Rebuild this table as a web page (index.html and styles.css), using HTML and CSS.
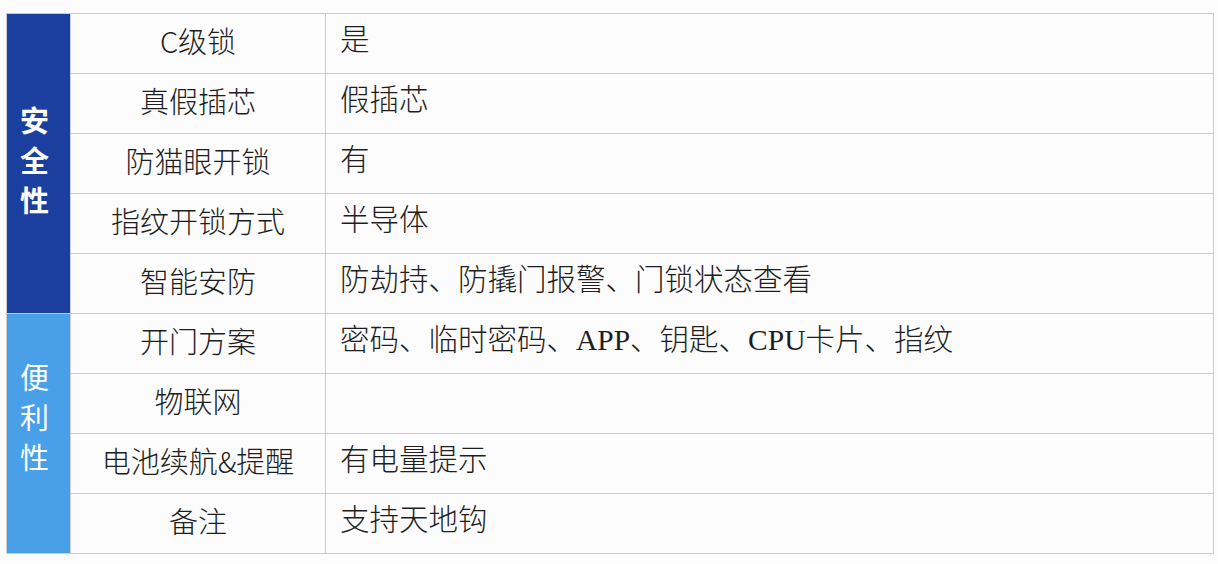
FILE: index.html
```html
<!DOCTYPE html>
<html lang="zh">
<head>
<meta charset="utf-8">
<link rel="stylesheet" href="styles.css">
</head>
<body>
<table class="spec">
  <colgroup>
    <col class="c-cat">
    <col class="c-name">
    <col class="c-val">
  </colgroup>
  <tbody>
    <tr>
      <td class="cat cat-safe" rowspan="5"><span>安</span><span>全</span><span>性</span></td>
      <td class="name">C级锁</td>
      <td class="val">是</td>
    </tr>
    <tr><td class="name">真假插芯</td><td class="val">假插芯</td></tr>
    <tr><td class="name">防猫眼开锁</td><td class="val">有</td></tr>
    <tr><td class="name">指纹开锁方式</td><td class="val">半导体</td></tr>
    <tr><td class="name">智能安防</td><td class="val">防劫持、防撬门报警、门锁状态查看</td></tr>
    <tr>
      <td class="cat cat-easy" rowspan="4"><span>便</span><span>利</span><span>性</span></td>
      <td class="name">开门方案</td>
      <td class="val">密码、临时密码、APP、钥匙、CPU卡片、指纹</td>
    </tr>
    <tr><td class="name">物联网</td><td class="val"></td></tr>
    <tr><td class="name">电池续航&amp;提醒</td><td class="val">有电量提示</td></tr>
    <tr><td class="name">备注</td><td class="val">支持天地钩</td></tr>
  </tbody>
</table>
</body>
</html>
```
FILE: styles.css
```css
html, body {
  margin: 0;
  padding: 0;
  background: #fcfcfd;
}
body {
  padding: 13px 0 0 6px;
}
.spec {
  border-collapse: collapse;
  table-layout: fixed;
  width: 1207px;
  font-family: "Noto Sans CJK SC", "Noto Sans", sans-serif;
  font-weight: 300;
  color: #1e1e1e;
  font-size: 29px;
}
.c-cat { width: 64px; }
.c-name { width: 255px; }
.c-val { width: 888px; }
.spec tr { height: 60px; }
.spec td {
  border: 1px solid #cbcbcb;
  padding: 0 0 6px 0;
  vertical-align: middle;
  line-height: 1;
}
.name {
  text-align: center;
}
.spec td.val {
  padding-left: 14px;
  font-family: "Liberation Serif", "Noto Sans CJK SC", serif;
  font-size: 29.5px;
}
.val, .name { white-space: nowrap; }
.cat {
  color: #fff;
  text-align: center;
  font-size: 29px;
  border-color: transparent;
}
.cat span {
  display: block;
  line-height: 40px;
}
.spec td.cat-safe {
  background: #1b3f9f;
  font-weight: 700;
  padding: 0 8px 9px 0;
}
.spec td.cat-easy {
  background: #4aa0e8;
  font-weight: 400;
  padding: 0 8px 36px 0;
}
```
